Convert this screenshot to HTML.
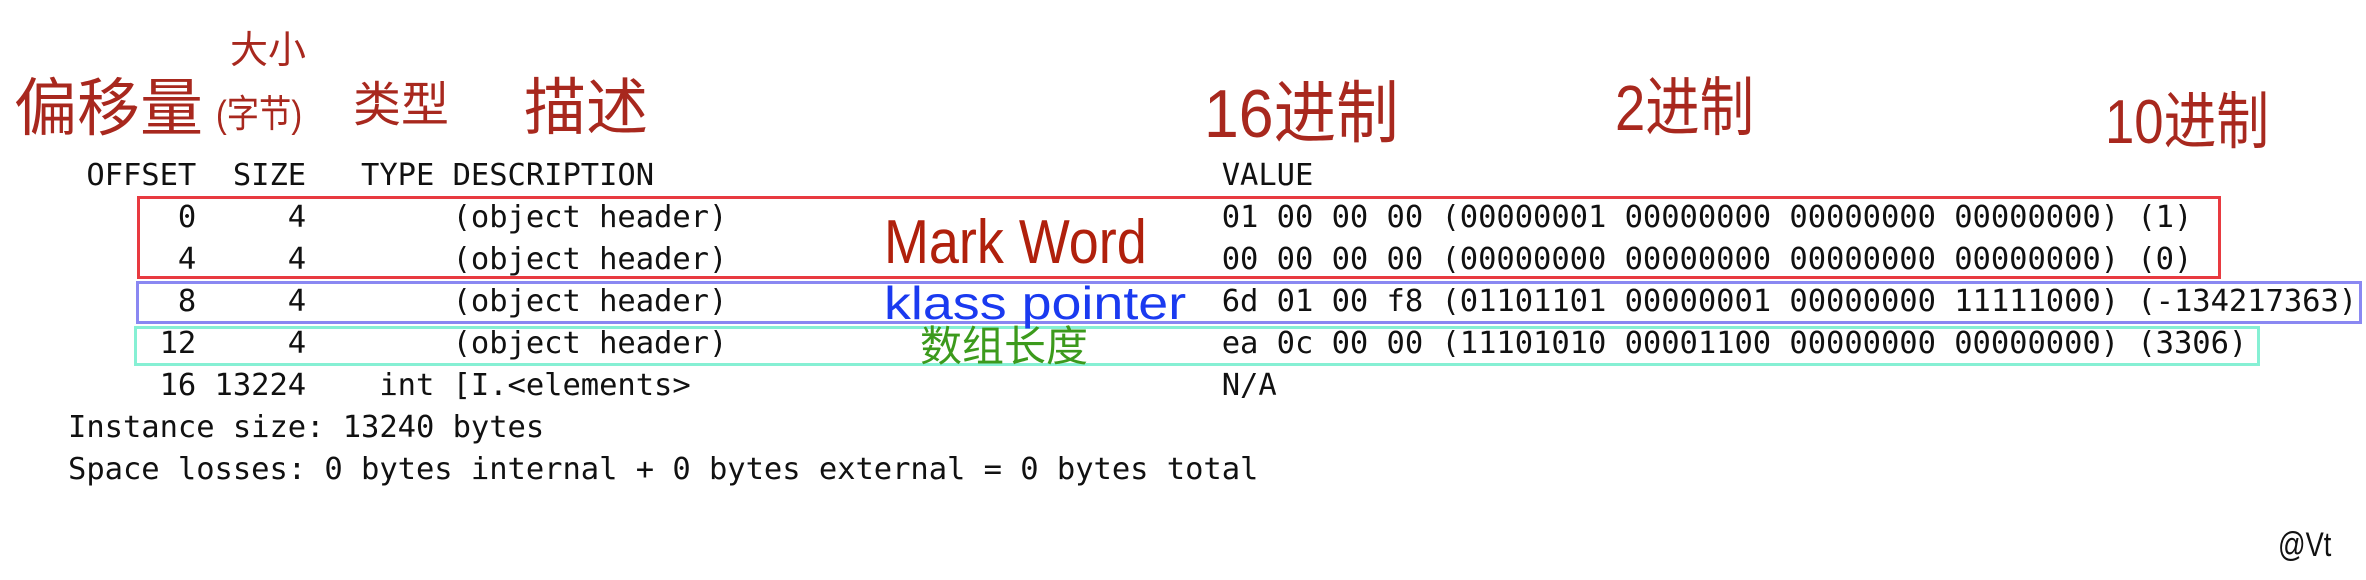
<!DOCTYPE html>
<html><head><meta charset="utf-8"><style>
html,body{margin:0;padding:0;background:#fff;width:2366px;height:580px;overflow:hidden;position:relative}
pre{position:absolute;left:68px;top:155px;margin:0;font-family:"DejaVu Sans Mono","Liberation Mono",monospace;font-size:30.5px;line-height:42.05px;color:#111;letter-spacing:-0.05px}
.a{position:absolute;white-space:nowrap;font-family:"Liberation Sans","WenQuanYi Zen Hei","Noto Sans CJK SC",sans-serif;line-height:1;transform-origin:0 0}
.r{color:#a8281e}
.box{position:absolute;box-sizing:border-box;border:3px solid}
</style></head><body>
<div class="box" style="left:137px;top:196px;width:2084px;height:83px;border-color:#e83a40"></div>
<div class="box" style="left:136px;top:281px;width:2226px;height:43px;border-color:#8a88f2"></div>
<div class="box" style="left:134px;top:326px;width:2126px;height:40px;border-color:#86f0d4"></div>
<pre> OFFSET  SIZE   TYPE DESCRIPTION                               VALUE
      0     4        (object header)                           01 00 00 00 (00000001 00000000 00000000 00000000) (1)
      4     4        (object header)                           00 00 00 00 (00000000 00000000 00000000 00000000) (0)
      8     4        (object header)                           6d 01 00 f8 (01101101 00000001 00000000 11111000) (-134217363)
     12     4        (object header)                           ea 0c 00 00 (11101010 00001100 00000000 00000000) (3306)
     16 13224    int [I.&lt;elements&gt;                             N/A
Instance size: 13240 bytes
Space losses: 0 bytes internal + 0 bytes external = 0 bytes total</pre>
<div class="a r" style="left:14px;top:78px;font-size:63px">偏移量</div>
<div class="a r" style="left:230px;top:32px;font-size:38px">大小</div>
<div class="a r" style="left:216px;top:96px;font-size:38px;transform:scaleX(.85)">(字节)</div>
<div class="a r" style="left:353px;top:82px;font-size:48px">类型</div>
<div class="a r" style="left:524px;top:78px;font-size:62px">描述</div>
<div class="a r" style="left:1204px;top:80px;font-size:68px;transform:scaleX(.92)">16进制</div>
<div class="a r" style="left:1615px;top:76px;font-size:64px;transform:scaleX(.85)">2进制</div>
<div class="a r" style="left:2105px;top:92px;font-size:62px;transform:scaleX(.85)">10进制</div>
<div class="a" style="left:884px;top:212px;font-size:62px;color:#b0200c;transform:scaleX(.87)">Mark Word</div>
<div class="a" style="left:884px;top:280px;font-size:46px;color:#1a3af0;transform:scaleX(1.17)">klass pointer</div>
<div class="a" style="left:920px;top:326px;font-size:42px;color:#3c9a1c">数组长度</div>
<div class="a" style="left:2278px;top:528px;font-size:34px;color:#111;transform:scaleX(.8)">@Vt</div>
</body></html>
